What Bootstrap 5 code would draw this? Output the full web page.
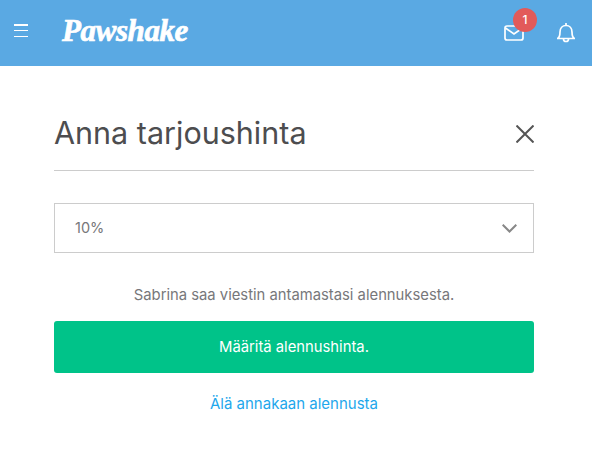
<!DOCTYPE html>
<html lang="fi">

<head>
    <meta charset="UTF-8">
    <meta name="viewport" content="width=device-width, initial-scale=1.0">
    <title>Pawshake</title>
    <link href="https://cdn.jsdelivr.net/npm/bootstrap@5.3.0/dist/css/bootstrap.min.css" rel="stylesheet">
    <style>
        body {
            font-family: "Inter", sans-serif;
            background-color: #fff;
            color: #77777a;
        }

        .top-bar {
            height: 66px;
            background-color: #5aa9e3;
            padding: 0 17px 0 14px;
        }

        .menu-btn {
            width: 14px;
            height: 13px;
            margin-top: -5px;
            display: flex;
            flex-direction: column;
            justify-content: space-between;
        }

        .menu-btn span {
            display: block;
            height: 1.5px;
            background-color: #fff;
        }

        .logo-text {
            font-family: "Liberation Serif", serif;
            font-style: italic;
            font-weight: 700;
            font-size: 31px;
            letter-spacing: -.4px;
            line-height: 36px;
            color: #fff;
            -webkit-text-stroke: .7px #fff;
            margin-left: 34px;
            margin-top: -5px;
        }

        .mail-wrap {
            position: relative;
            width: 20px;
            height: 16px;
            margin-right: 33px;
            margin-top: -1px;
        }

        .mail-badge {
            position: absolute;
            top: -17px;
            left: 9px;
            width: 24px;
            height: 24px;
            border-radius: 50%;
            background-color: #e25a5a;
            color: #fff;
            font-size: 12px;
            font-weight: 500;
            line-height: 24px;
            text-align: center;
        }

        .page-body {
            padding: 0 58px 0 54px;
        }

        .title-row {
            height: 105px;
            border-bottom: 1px solid #ccc;
            padding-top: 47px;
        }

        .page-title {
            font-size: 30.500px;
            font-weight: 400;
            line-height: 40px;
            color: #4d4d4f;
            margin: 0;
        }

        .close-icon {
            margin-top: 12px;
        }

        .price-select {
            height: 50px;
            margin-top: 32px;
            border: 1px solid #ccc;
            padding: 0 16px 0 20px;
            font-size: 14.500px;
            color: #77777a;
        }

        .hint-text {
            font-size: 14.800px;
            line-height: 20px;
            margin: 32px 0 16px;
        }

        .save-btn {
            height: 52px;
            background-color: #00c389;
            border-radius: 3px;
            color: #fff;
            font-size: 14.800px;
            font-weight: 400;
            line-height: 52px;
        }

        .skip-link {
            display: block;
            margin-top: 21px;
            font-size: 15px;
            line-height: 20px;
            color: #1ea7ec;
            text-decoration: none;
        }
    </style>
</head>

<body>
    <nav class="top-bar d-flex align-items-center">
        <div class="menu-btn"><span></span><span></span><span></span></div>
        <div class="logo-text">Pawshake</div>
        <div class="ms-auto d-flex align-items-center">
            <div class="mail-wrap">
                <svg width="20" height="16" viewBox="0 0 20 16" fill="none" stroke="#fff" stroke-width="1.700" class="d-block">
                    <rect x="1" y="1" width="18" height="14" rx="2" />
                    <path d="M1.500 3 10 9l8.500-6" />
                </svg>
                <div class="mail-badge">1</div>
            </div>
            <svg width="18" height="20" viewBox="0 0 18 20" fill="none" stroke="#fff" stroke-width="1.700">
                <path d="M.5 15.500c2-1 2.500-3 2.500-6.500C3 5 5.500 2.500 9 2.500S15 5 15 9c0 3.500.5 5.500 2.500 6.500z" stroke-linejoin="round" />
                <path d="M6.500 16a2.500 2.500 0 0 0 5 0" />
                <path d="M9 0v2.500" />
            </svg>
        </div>
    </nav>

    <div class="page-body">
        <div class="title-row d-flex justify-content-between">
            <h1 class="page-title">Anna tarjoushinta</h1>
            <svg class="close-icon" width="18" height="18" viewBox="0 0 18 18" fill="none" stroke="#555" stroke-width="2">
                <path d="M.5.500l17 17M17.500.500l-17 17" />
            </svg>
        </div>

        <div class="price-select d-flex align-items-center justify-content-between">
            <span>10%</span>
            <svg width="15" height="9" viewBox="0 0 15 9" fill="none" stroke="#888" stroke-width="2">
                <path d="M.7.700 7.500 7.500 14.300.700" />
            </svg>
        </div>

        <p class="hint-text text-center">Sabrina saa viestin antamastasi alennuksesta.</p>
        <div class="save-btn text-center">Määritä alennushinta.</div>
        <a class="skip-link text-center" href="#">Älä annakaan alennusta</a>
    </div>

    <script src="https://cdn.jsdelivr.net/npm/bootstrap@5.3.0/dist/js/bootstrap.bundle.min.js"></script>
</body>

</html>
